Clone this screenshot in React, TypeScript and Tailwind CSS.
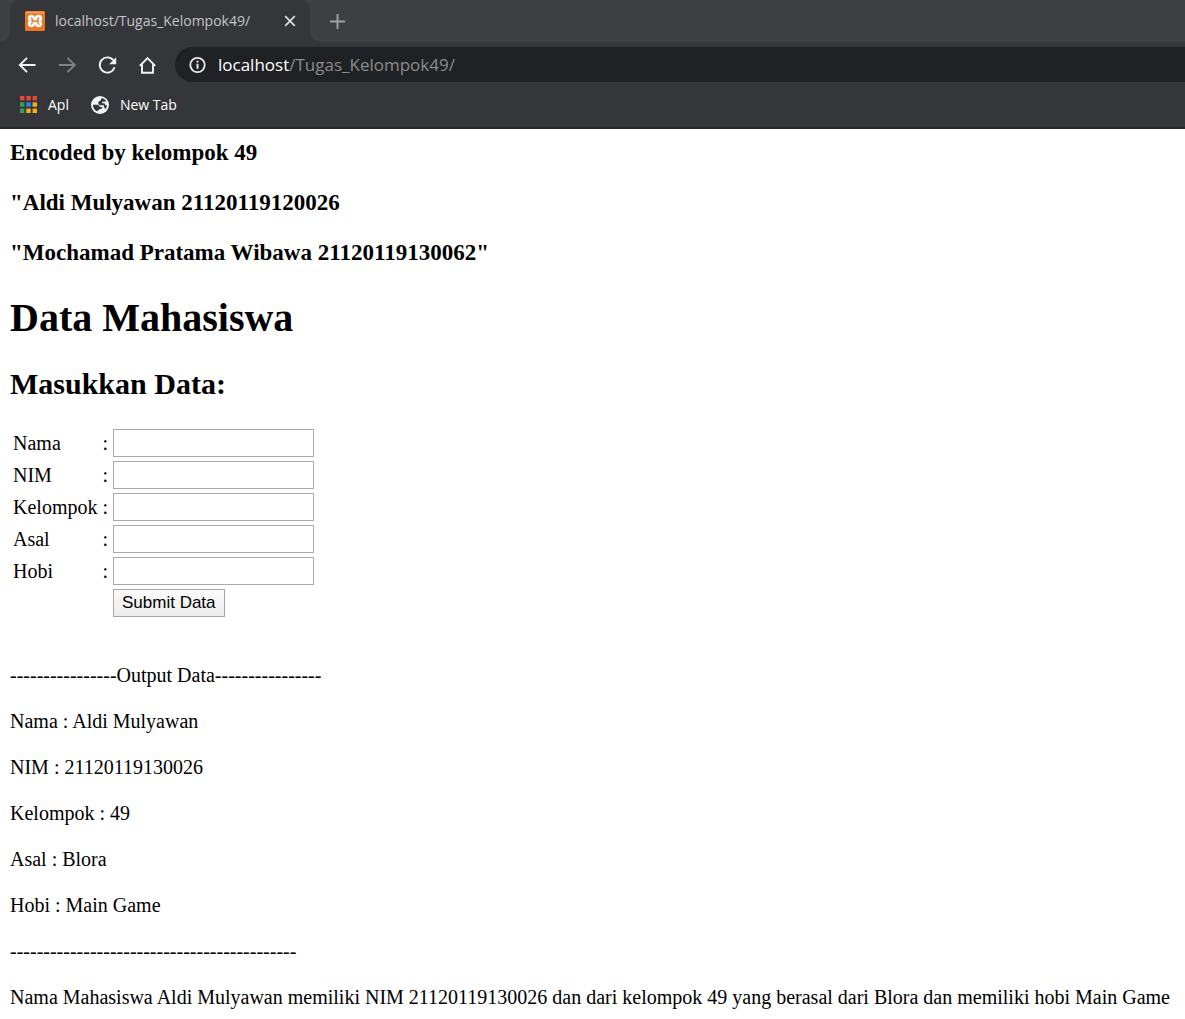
import { useState } from "react";

const fields = ["Nama", "NIM", "Kelompok", "Asal", "Hobi"];

const output = [
  "----------------Output Data----------------",
  "Nama : Aldi Mulyawan",
  "NIM : 21120119130026",
  "Kelompok : 49",
  "Asal : Blora",
  "Hobi : Main Game",
  "-------------------------------------------",
  "Nama Mahasiswa Aldi Mulyawan memiliki NIM 21120119130026 dan dari kelompok 49 yang berasal dari Blora dan memiliki hobi Main Game",
];

const appColors = [
  "#e8453c", "#e8453c", "#e8453c",
  "#34a05a", "#2f86ee", "#f5ae1c",
  "#34a05a", "#f5ae1c", "#f5ae1c",
];

function XamppIcon() {
  return (
    <svg width="20" height="20" viewBox="0 0 20 20" aria-hidden="true">
      <rect width="20" height="20" rx="1.5" fill="#ec7623" />
      <rect x="1" y="0.5" width="18" height="2" fill="#f39a5b" />
      <path
        d="M10 6.200C9.200 4.400 8 3.700 6.500 3.700C4.200 3.700 2.800 5.200 2.800 7.300C2.800 8.400 3.200 9.300 3.800 10C3.100 10.700 2.800 11.600 2.800 12.600C2.800 14.800 4.300 16.300 6.500 16.300C8.100 16.300 9.200 15.500 10 13.800C10.800 15.500 11.900 16.300 13.500 16.300C15.700 16.300 17.200 14.800 17.200 12.600C17.200 11.600 16.900 10.700 16.200 10C16.800 9.300 17.200 8.400 17.200 7.300C17.200 5.200 15.800 3.700 13.500 3.700C12 3.700 10.800 4.400 10 6.200Z"
        fill="#fff"
      />
      <path
        d="M6.200 6.900C7.500 7 7.600 9.900 6.400 10C7.600 10.100 7.500 13 6.200 13.100M13.800 6.900C12.500 7 12.400 9.900 13.600 10C12.400 10.100 12.500 13 13.800 13.100M7 10h6"
        fill="none"
        stroke="#ec7623"
        strokeWidth="1.400"
        strokeLinecap="round"
      />
    </svg>
  );
}

function ArrowIcon({ forward = false }: { forward?: boolean }) {
  return (
    <svg width="24" height="24" viewBox="0 0 24 24" fill="none" stroke="currentColor" strokeWidth="1.900" aria-hidden="true">
      {forward ? <path d="M4 12h15M12.500 4.800L19.700 12l-7.200 7.200" /> : <path d="M20.500 12H5.500M12 4.800L4.800 12l7.200 7.200" />}
    </svg>
  );
}

function ReloadIcon() {
  return (
    <svg width="24" height="24" viewBox="0 0 24 24" aria-hidden="true">
      <path d="M18.300 7.200A7.600 7.600 0 1 0 19.600 14.300" fill="none" stroke="currentColor" strokeWidth="1.900" />
      <path d="M21.200 4.200v7h-7z" fill="currentColor" />
    </svg>
  );
}

function HomeIcon() {
  return (
    <svg width="24" height="24" viewBox="0 0 24 24" fill="none" stroke="currentColor" strokeWidth="1.900" aria-hidden="true">
      <path d="M4.800 12.800L12.500 5l7.700 7.800M7 11.500v8.300h11v-8.300" />
    </svg>
  );
}

function InfoIcon() {
  return (
    <svg width="18" height="18" viewBox="0 0 18 18" aria-hidden="true">
      <circle cx="8.500" cy="9" r="7.200" fill="none" stroke="#e8eaed" strokeWidth="1.800" />
      <path d="M8.500 7.800v5M8.500 4.800v1.800" stroke="#e8eaed" strokeWidth="2" />
    </svg>
  );
}

function AppsIcon() {
  return (
    <svg width="17" height="17" viewBox="0 0 17 17" aria-hidden="true">
      {appColors.map((c, i) => (
        <rect key={i} x={(i % 3) * 6.3} y={Math.floor(i / 3) * 6.3} width="4.400" height="4.400" fill={c} />
      ))}
    </svg>
  );
}

function GlobeIcon() {
  return (
    <svg width="18" height="18" viewBox="0 0 18 18" aria-hidden="true">
      <circle cx="9" cy="9" r="9" fill="#f1f3f4" />
      <path
        d="M1.900 8.700H6.300C8 8.900 8.800 9.600 8.700 10.900H11.400C11.500 12.200 10.700 12.900 9.400 12.900H8.300V14.300H6.600V15.600C3.600 14.400 1.900 11.900 1.900 8.700Z"
        fill="#35363a"
      />
      <path
        d="M10.700 2C12.700 2.400 14.500 3.800 15.400 5.600H12.600C11.300 5.700 10.800 6.300 11 7.200H13C14 7.500 14.300 8.300 14.300 9.300H16C15.900 10.600 15.400 12 14.500 13L12.900 11.100V9.200H9.700C7.900 9 7.200 8.100 7.300 6.700C7.500 5.400 8.300 4.800 9.500 4.700Z"
        fill="#35363a"
      />
    </svg>
  );
}

function BrowserChrome() {
  return (
    <header className="border-b-2 border-[#252629] bg-[#35363a] font-['Open_Sans','Noto_Sans',sans-serif]">
      <div className="flex h-[42px] bg-[#3c4043]">
        <div className="w-[10px] bg-[#35363a]">
          <div className="h-full rounded-br-[10px] bg-[#3c4043]" />
        </div>
        <div className="flex w-[300px] items-center rounded-t-[10px] bg-[#35363a] pr-3 pl-[15px]">
          <XamppIcon />
          <span className="ml-[10px] flex-1 pb-0.5 text-[14px] whitespace-nowrap text-[#c3c5c8]">localhost/Tugas_Kelompok49/</span>
          <button aria-label="Close tab" className="flex size-4 items-center justify-center text-[#dadce0]">
            <svg width="12" height="12" viewBox="0 0 12 12" stroke="currentColor" strokeWidth="1.800" aria-hidden="true">
              <path d="M1.200 1.200l9.600 9.600M10.800 1.200L1.200 10.800" />
            </svg>
          </button>
        </div>
        <div className="flex flex-1 bg-[#35363a]">
          <div className="flex flex-1 items-center rounded-bl-[10px] bg-[#3c4043] pl-5">
            <button aria-label="New tab" className="text-[#9da0a3]">
              <svg width="15" height="15" viewBox="0 0 15 15" stroke="currentColor" strokeWidth="2" aria-hidden="true">
                <path d="M7.500 0v15M0 7.500h15" />
              </svg>
            </button>
          </div>
        </div>
      </div>
      <div className="flex h-[45px] items-center pl-[15px] text-[#f1f3f4]">
        <nav className="flex gap-4">
          <button aria-label="Back"><ArrowIcon /></button>
          <button aria-label="Forward" className="text-[#808285]"><ArrowIcon forward /></button>
          <button aria-label="Reload"><ReloadIcon /></button>
          <button aria-label="Home"><HomeIcon /></button>
        </nav>
        <div className="ml-4 flex h-[35px] flex-1 items-center rounded-l-full bg-[#202124] pl-[14px]">
          <InfoIcon />
          <span className="ml-[11px] text-[17px] text-[#8a8c8f]">
            <span className="text-white">localhost</span>/Tugas_Kelompok49/
          </span>
        </div>
      </div>
      <div className="flex h-10 items-center pb-[5px] pl-5 text-[14px] text-white">
        <a href="#apps" className="flex items-center gap-[11px]">
          <AppsIcon />
          Apl
        </a>
        <a href="#newtab" className="ml-[22px] flex items-center gap-[11px]">
          <GlobeIcon />
          New Tab
        </a>
      </div>
    </header>
  );
}

export default function App() {
  const [values, setValues] = useState<Record<string, string>>({});

  return (
    <div className="min-h-screen bg-white text-black">
      <BrowserChrome />
      <main className="px-[10px] pt-[11px] font-['Liberation_Serif',serif] text-[20px] leading-[26px]">
        <div className="flex flex-col gap-6 text-[23px] font-bold">
          <h3>Encoded by kelompok 49</h3>
          <h3>"Aldi Mulyawan 21120119120026</h3>
          <h3>"Mochamad Pratama Wibawa 21120119130062"</h3>
        </div>
        <h1 className="mt-[29px] text-[40px] leading-[46px] font-bold">Data Mahasiswa</h1>
        <h2 className="mt-[26px] text-[30px] leading-[34px] font-bold">Masukkan Data:</h2>
        <form onSubmit={(e) => e.preventDefault()}>
          <table className="mt-[25px] border-separate border-spacing-x-[2px] border-spacing-y-[2px]">
            <tbody>
              {fields.map((f) => (
                <tr key={f} className="h-[30px]">
                  <td className="px-px"><label htmlFor={f}>{f}</label></td>
                  <td className="pr-0.5 pl-0.5">:</td>
                  <td className="px-px">
                    <input
                      id={f}
                      value={values[f] ?? ""}
                      onChange={(e) => setValues({ ...values, [f]: e.target.value })}
                      className="block h-7 w-[201px] border border-[#a9a9a9] bg-white px-1 font-['Liberation_Sans',sans-serif] text-[16px]"
                    />
                  </td>
                </tr>
              ))}
              <tr className="h-[30px]">
                <td />
                <td />
                <td className="px-px">
                  <button
                    type="submit"
                    className="block h-7 border border-[#a6a6a6] bg-linear-to-b from-[#fbfbfb] to-[#ececec] px-2 font-['Liberation_Sans',sans-serif] text-[17px] leading-6"
                  >
                    Submit Data
                  </button>
                </td>
              </tr>
            </tbody>
          </table>
        </form>
        <section className="mt-[42px] flex flex-col gap-5">
          {output.map((line) => (
            <p key={line}>{line}</p>
          ))}
        </section>
      </main>
    </div>
  );
}
